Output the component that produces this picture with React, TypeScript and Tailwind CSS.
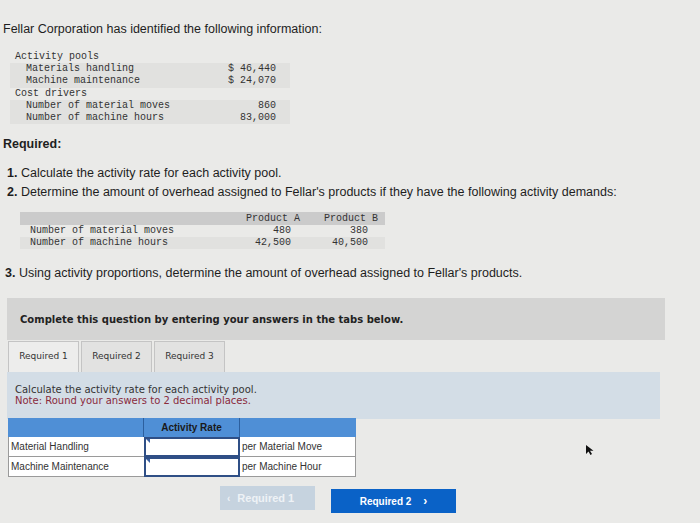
const mono = { fontFamily: '"Liberation Mono", "Courier New", monospace' };

const poolRows = [
  { label: "Activity pools", indent: false, value: "", shade: false },
  { label: "Materials handling", indent: true, value: "$ 46,440", shade: true },
  { label: "Machine maintenance", indent: true, value: "$ 24,070", shade: true },
  { label: "Cost drivers", indent: false, value: "", shade: false },
  { label: "Number of material moves", indent: true, value: "860", shade: true },
  { label: "Number of machine hours", indent: true, value: "83,000", shade: true },
];

const demandRows = [
  { label: "Number of material moves", a: "480", b: "380" },
  { label: "Number of machine hours", a: "42,500", b: "40,500" },
];

const rateRows = [
  { label: "Material Handling", unit: "per Material Move" },
  { label: "Machine Maintenance", unit: "per Machine Hour" },
];

export default function App() {
  return (
    <div className="relative h-[523px] w-[700px] overflow-hidden bg-[#eaeae8] font-['Liberation_Sans',Arial,sans-serif] text-[#1e1e1e]">
      <div className="pl-[3px] pt-[21px] text-[12.5px] leading-[16px]">
        Fellar Corporation has identified the following information:
      </div>

      {/* activity pools */}
      <div className="ml-[10px] mt-[14px] w-[280px] text-[10px] leading-[12.2px] text-[#333]" style={mono}>
        {poolRows.map((r) => (
          <div
            className={`flex justify-between pr-[14px] ${r.shade ? "bg-[#e1e1df]" : ""} ${r.indent ? "pl-[16px]" : "pl-[5px]"}`}
            key={r.label}
          >
            <span>{r.label}</span>
            <span>{r.value}</span>
          </div>
        ))}
      </div>

      <div className="pl-[3px] pt-[12px] text-[12.5px] font-bold leading-[16px]">Required:</div>

      <div className="pl-[7px] pt-[12px] text-[12.5px] leading-[19px]">
        <div>
          <b>1.</b> Calculate the activity rate for each activity pool.
        </div>
        <div>
          <b>2.</b> Determine the amount of overhead assigned to Fellar's products if they have the following activity demands:
        </div>
      </div>

      {/* activity demands */}
      <div className="ml-[20px] mt-[10px] w-[365px] text-[10px] leading-[12px] text-[#333]" style={mono}>
        <div className="grid grid-cols-[205px_78px_82px] bg-[#cbcbcb] pt-[1px]">
          <span />
          <span className="pr-[3px] text-right">Product A</span>
          <span className="pr-[7px] text-right">Product B</span>
        </div>
        {demandRows.map((r, i) => (
          <div
            className={`grid grid-cols-[205px_78px_82px] ${i === 1 ? "bg-[#e1e1df]" : ""}`}
            key={r.label}
          >
            <span className="pl-[10px]">{r.label}</span>
            <span className="pr-[12px] text-right">{r.a}</span>
            <span className="pr-[17px] text-right">{r.b}</span>
          </div>
        ))}
      </div>

      <div className="pl-[5px] pt-[16px] text-[12.5px] leading-[16px]">
        <b>3.</b> Using activity proportions, determine the amount of overhead assigned to Fellar's products.
      </div>

      {/* instructions */}
      <div className="ml-[7px] mt-[17px] flex h-[42px] w-[658px] items-center bg-[#d4d4d3] pl-[13px] font-['DejaVu_Sans',Verdana,sans-serif] text-[10px] font-bold text-[#222]">
        Complete this question by entering your answers in the tabs below.
      </div>

      <div className="ml-[8px] flex gap-[2px] pt-[1px] font-['DejaVu_Sans',Verdana,sans-serif] text-[9px] text-[#333]">
        {["Required 1", "Required 2", "Required 3"].map((t, i) => (
          <div
            className={`flex h-[31px] w-[71px] items-center justify-center border border-b-0 border-[#c4c4c4] ${i === 0 ? "bg-[#ededec]" : "bg-[#e2e2e1]"}`}
            key={t}
          >
            {t}
          </div>
        ))}
      </div>

      <div className="ml-[7px] h-[47px] w-[653px] bg-[#d3dde6] pl-[8px] pt-[12px] font-['DejaVu_Sans',Verdana,sans-serif] text-[10px] leading-[11px]">
        <div className="text-[#333]">Calculate the activity rate for each activity pool.</div>
        <div className="text-[#8a2a3c]">Note: Round your answers to 2 decimal places.</div>
      </div>

      {/* rate table */}
      <div className="ml-[8px] mt-[-1px] w-[348px] text-[10px]">
        <div className="grid h-[19px] grid-cols-[136px_96px_116px] bg-[#4f8fd6]">
          <span className="border-r border-[#2c5f9e]" />
          <span className="flex items-center justify-center border-r border-[#2c5f9e] font-bold text-[#1a1a1a]">
            Activity Rate
          </span>
          <span />
        </div>
        {rateRows.map((r) => (
          <div className="grid h-[20px] grid-cols-[136px_96px_116px]" key={r.label}>
            <span className="flex items-center border-b border-l border-[#9a9a9a] bg-white pl-[2px] text-[#333]">
              {r.label}
            </span>
            <span className="relative border-2 border-[#2f4f86] bg-white">
              <span className="absolute left-0 top-0 h-0 w-0 border-l-[4px] border-t-[4px] border-l-transparent border-t-[#3a5fa0]" />
            </span>
            <span className="flex items-center border-b border-r border-[#9a9a9a] bg-white pl-[2px] text-[#333]">
              {r.unit}
            </span>
          </div>
        ))}
      </div>

      <div className="ml-[220px] mt-[9px] flex items-start gap-[16px] text-[10px] font-bold">
        <div className="flex h-[24px] w-[95px] items-center gap-[7px] bg-[#c6d3df] pl-[7px] text-[#eef2f6]">
          <span>&lsaquo;</span>
          <span className="text-[11px]">Required 1</span>
        </div>
        <div className="mt-[3px] flex h-[24px] w-[125px] items-center justify-center gap-[12px] bg-[#0a62c7] text-white">
          <span>Required 2</span>
          <span className="text-[12px]">&rsaquo;</span>
        </div>
      </div>

      {/* mouse pointer */}
      <svg className="absolute left-[585px] top-[444px]" width="10" height="12" viewBox="0 0 10 12">
        <path d="M1 1 L1 10 L3.5 7.5 L5.5 11 L7 10 L5 6.8 L8.5 6.8 Z" fill="#111" />
      </svg>
    </div>
  );
}
